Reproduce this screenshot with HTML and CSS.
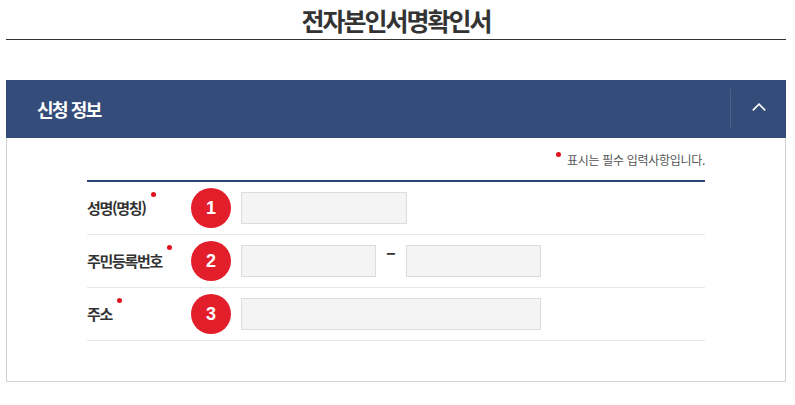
FILE: index.html
```html
<!DOCTYPE html>
<html lang="ko">
<head>
<meta charset="utf-8">
<title>전자본인서명확인서</title>
<link rel="stylesheet" href="styles.css">
</head>
<body>
<div class="page">
  <h1 class="title">전자본인서명확인서</h1>
  <section class="panel">
    <div class="panel-head">
      <h2 class="panel-title">신청 정보</h2>
      <button class="toggle" type="button" aria-label="접기">
        <svg width="14" height="8" viewBox="0 0 14 8"><polyline points="0.8,7.4 7,1.2 13.2,7.4" fill="none" stroke="#fff" stroke-width="1.6"/></svg>
      </button>
    </div>
    <div class="panel-body">
      <p class="note"><span class="dot note-dot"></span>표시는 필수 입력사항입니다.</p>
      <div class="form">
        <div class="row">
          <div class="label">성명(명칭)<span class="dot req"></span></div>
          <div class="num">1</div>
          <div class="fields"><span class="input w166"></span></div>
        </div>
        <div class="row">
          <div class="label">주민등록번호<span class="dot req"></span></div>
          <div class="num">2</div>
          <div class="fields"><span class="input w135"></span><span class="dash">–</span><span class="input w135"></span></div>
        </div>
        <div class="row">
          <div class="label">주소<span class="dot req"></span></div>
          <div class="num">3</div>
          <div class="fields"><span class="input w300"></span></div>
        </div>
      </div>
    </div>
  </section>
</div>
</body>
</html>
```

FILE: styles.css
```css
* { box-sizing: border-box; }
html, body { margin: 0; padding: 0; background: #fff; }
body { font-family: "Noto Sans CJK KR", "Noto Sans", sans-serif; color: #333; }

.page { width: 780px; margin: 0 0 0 6px; }

.title {
  margin: 0;
  height: 40px;
  border-bottom: 1px solid #333;
  text-align: center;
  font-size: 25px;
  font-weight: 700;
  line-height: 40px;
  letter-spacing: -2px;
  color: #333;
}

.panel { margin-top: 40px; }

.panel-head {
  height: 58px;
  background: #344c79;
  display: flex;
  align-items: center;
  justify-content: space-between;
  padding-left: 31px;
}
.panel-title {
  margin: 0;
  font-size: 18px;
  font-weight: 700;
  letter-spacing: -1.5px;
  color: #fff;
  line-height: 1;
}
.toggle {
  width: 56px;
  height: 40px;
  border: 0;
  border-left: 1px solid #4b608a;
  background: transparent;
  padding: 0 0 4px 0;
  display: flex;
  align-items: center;
  justify-content: center;
}

.panel-body {
  border: 1px solid #d2d2d2;
  border-top: 0;
  padding: 12px 80px 40px 80px;
}

.note {
  margin: 0 0 10px 0;
  height: 20px;
  line-height: 20px;
  font-size: 12px;
  letter-spacing: -0.3px;
  color: #555;
  text-align: right;
}
.dot {
  display: inline-block;
  width: 5px;
  height: 5px;
  border-radius: 50%;
  background: #e3101e;
}
.note-dot { margin-right: 6px; vertical-align: 8px; }

.form { border-top: 2px solid #2c4677; }

.row {
  display: flex;
  align-items: center;
  padding: 10px 0;
  border-bottom: 1px solid #e6e6e6;
}
.label {
  width: 104px;
  font-size: 15px;
  font-weight: 700;
  letter-spacing: -1.3px;
  color: #333;
  line-height: 20px;
}
.req { margin-left: 5px; vertical-align: top; position: relative; top: -6px; }

.num {
  width: 40px;
  height: 40px;
  border-radius: 50%;
  background: #e31e2b;
  color: #fff;
  font-family: "Liberation Sans", Arial, sans-serif;
  font-weight: 700;
  font-size: 18px;
  display: flex;
  align-items: center;
  justify-content: center;
  margin: -4px 0 -4px 0;
}
.fields { display: flex; align-items: flex-start; margin-left: 10px; }
.input {
  display: block;
  height: 32px;
  background: #f4f4f4;
  border: 1px solid #dcdcdc;
}
.w166 { width: 166px; }
.w135 { width: 135px; }
.w300 { width: 300px; }
.dash {
  width: 30px;
  text-align: center;
  font-size: 18px;
  font-weight: 700;
  line-height: 18px;
  margin-top: -3px;
  color: #333;
}
```
